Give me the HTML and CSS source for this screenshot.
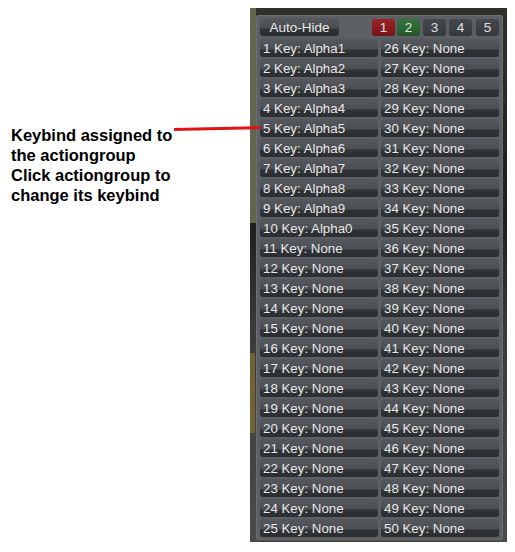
FILE: index.html
```html
<!DOCTYPE html>
<html>
<head>
<meta charset="utf-8">
<link rel="stylesheet" href="styles.css">
</head>
<body>
<div class="page">
  <div class="note">
    <p>Keybind assigned to<br>the actiongroup<br>Click actiongroup to<br>change its keybind</p>
  </div>
  <div class="scene">
    <div class="panel">
      <div class="topbar">
        <div class="btn auto">Auto-Hide</div>
        <div class="tabs">
          <div class="tab red">1</div>
          <div class="tab green">2</div>
          <div class="tab">3</div>
          <div class="tab">4</div>
          <div class="tab">5</div>
        </div>
      </div>
      <div class="grid" id="grid"></div>
    </div>
  </div>
  <div class="arrow"></div>
</div>
<script src="script.js"></script>
</body>
</html>
```
FILE: script.js
```js
var g = document.getElementById('grid');
var html = '';
for (var i = 1; i <= 25; i++) {
  var l = i <= 10 ? 'Alpha' + (i % 10) : 'None';
  html += '<div class="btn">' + i + ' Key: ' + l + '</div>';
  html += '<div class="btn">' + (i + 25) + ' Key: None</div>';
}
g.innerHTML = html;
```
FILE: styles.css
```css
html, body { margin: 0; padding: 0; background: #fff; }
.page {
  position: relative;
  display: flex;
  width: 515px;
  height: 552px;
  font-family: "Liberation Sans", Arial, sans-serif;
}
.note { width: 250px; flex: none; }
.note p {
  margin: 0;
  padding: 125px 0 0 11px;
  font-size: 16.5px;
  font-weight: bold;
  line-height: 20px;
  color: #000;
}
.scene {
  margin-top: 8px;
  width: 257px;
  height: 534px;
  padding: 7px 4px 0 6px;
  box-sizing: border-box;
  background:
    linear-gradient(90deg, rgba(105,108,80,0.9) 0, rgba(105,108,80,0.9) 6px, transparent 6px) 0 0 / 100% 215px no-repeat,
    linear-gradient(90deg, rgba(150,120,50,0.6) 0, rgba(150,120,50,0.6) 5px, transparent 5px) 0 345px / 100% 80px no-repeat,
    linear-gradient(180deg, #2f2f2c 0, #1e1e1c 40%, #3a3a38 60%, #4a4a48 100%);
}
.panel {
  height: 525px;
  background: #5c5f63;
  border-radius: 3px;
  padding: 3px 4px 0 4px;
  box-sizing: border-box;
  box-shadow: inset 0 0 0 1px #6a6d71;
}
.topbar {
  display: flex;
  justify-content: space-between;
  height: 18px;
  margin-bottom: 3px;
}
.btn {
  height: 18px;
  border-radius: 3px;
  background: linear-gradient(180deg, #55585c 0, #4b4e52 55%, #303336 62%, #2b2e31 100%);
  color: #e8e8e8;
  font-size: 13.3px;
  line-height: 20px;
  padding-left: 3px;
  white-space: nowrap;
  overflow: hidden;
}
.auto {
  width: 79px;
  padding: 0;
  text-align: center;
  box-sizing: border-box;
  font-size: 13.5px;
}
.tabs { display: flex; gap: 2px; padding-top: 1px; }
.tab {
  width: 23px;
  height: 17px;
  border-radius: 3px;
  background: linear-gradient(180deg, #45484d 0, #3d4045 55%, #34373b 100%);
  color: #e0e0e0;
  font-size: 13.5px;
  line-height: 18px;
  text-align: center;
  overflow: hidden;
}
.tabs .tab:nth-child(3), .tabs .tab:nth-child(4) { margin-left: 1px; }
.tabs .tab:nth-child(5) { margin-left: 2px; }
.tab.red { background: linear-gradient(180deg, #9a2225 0, #8a1c1f 55%, #701518 100%); }
.tab.green { background: linear-gradient(180deg, #33753b 0, #2c6733 55%, #23512a 100%); }
.grid {
  display: grid;
  grid-template-columns: 118px 118px;
  column-gap: 3px;
  row-gap: 2px;
}
.arrow {
  position: absolute;
  left: 174px;
  top: 128px;
  width: 87px;
  height: 3px;
  background: #e01414;
  transform: rotate(-1.2deg);
  transform-origin: left center;
}
```
